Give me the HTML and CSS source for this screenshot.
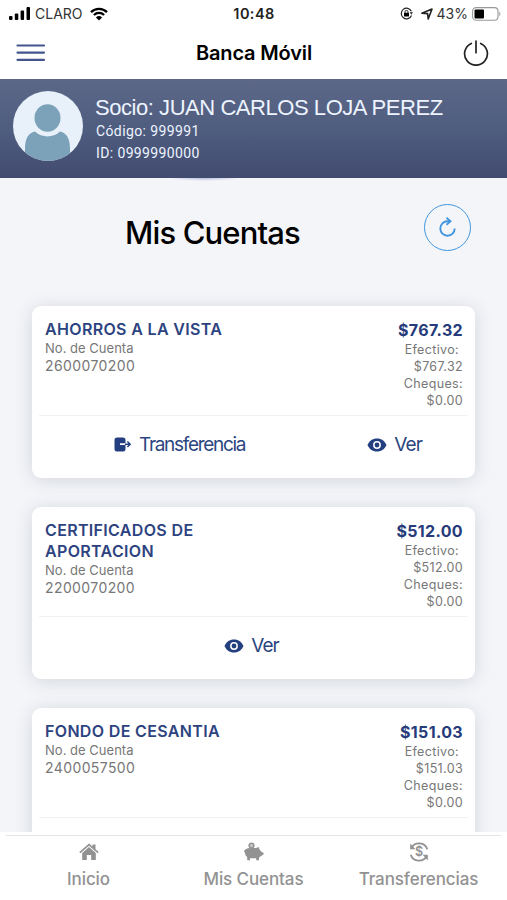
FILE: index.html
```html
<!DOCTYPE html>
<html lang="es">
  <head>
    <meta charset="UTF-8" />
    <meta name="viewport" content="width=device-width, initial-scale=1.0" />
    <title>Banca Móvil</title>
    <link rel="stylesheet" href="styles.css" />
  </head>
  <body>
    <svg class="sprite">
      <symbol id="eye" viewBox="0 0 20 14">
        <path fill-rule="evenodd" d="M10 .5C5.500.5 2 3.200.5 7 2 10.800 5.500 13.500 10 13.500s8-2.700 9.500-6.500C18 3.200 14.500.5 10 .5zm0 2.600a3.900 3.900 0 1 1 0 7.800 3.900 3.900 0 0 1 0-7.800z" />
        <circle cx="10" cy="7" r="2.400" />
      </symbol>
    </svg>

    <div class="statusbar">
      <div class="carrier">
        <svg width="22" height="13" viewBox="0 0 22 13">
          <rect x="0" y="9" width="3.500" height="4" rx="1" />
          <rect x="5.800" y="6.500" width="3.500" height="6.500" rx="1" />
          <rect x="11.600" y="3.500" width="3.500" height="9.500" rx="1" />
          <rect x="17.500" y="0" width="3.500" height="13" rx="1" />
        </svg>
        <span class="carrier_name">CLARO</span>
        <svg width="18" height="14" viewBox="0 0 18 14">
          <path d="M1 5.200a11.500 11.500 0 0 1 16 0M3.900 8a7.400 7.400 0 0 1 10.200 0" fill="none" stroke="#000" stroke-width="2.300" />
          <path d="M9 13.500 5.900 10.400a4.500 4.500 0 0 1 6.200 0z" />
        </svg>
      </div>
      <div class="clock">10:48</div>
      <div class="battery">
        <svg width="13" height="13" viewBox="0 0 13 13">
          <path d="M11.400 4.300A5.300 5.300 0 1 0 11.500 8.500" fill="none" stroke="#222" stroke-width="1.200" />
          <path d="M9.700 5.200h3.200l-1.500 2.500z" fill="#222" />
          <rect x="4" y="5.800" width="5" height="3.600" rx=".5" />
          <path d="M5 6V4.900a1.500 1.500 0 0 1 3 0V6" fill="none" stroke="#222" />
        </svg>
        <svg class="arrow" width="12" height="12" viewBox="0 0 12 12">
          <path d="M.9 5.300 11 1 7.200 11 6.600 5.600z" fill="none" stroke="#222" stroke-width="1.600" stroke-linejoin="round" />
        </svg>
        <span class="percent">43%</span>
        <svg width="29" height="14" viewBox="0 0 29 14">
          <rect x=".6" y=".6" width="25.400" height="12.600" rx="3.500" fill="none" stroke="#999" stroke-width="1.100" />
          <rect x="2.500" y="2.500" width="9.500" height="9" rx="1" />
          <path d="M27.300 4.800c1.400.4 1.400 4 0 4.400z" fill="#999" />
        </svg>
      </div>
    </div>

    <header class="topbar">
      <svg class="menu" width="30" height="18" viewBox="0 0 30 18">
        <path d="M1.500 1.500h26.500M1.500 8.600h26.500M1.500 15.800h26.500" stroke="#43558c" stroke-width="2.200" stroke-linecap="round" />
      </svg>
      <h1>Banca Móvil</h1>
      <svg class="power" width="26" height="26" viewBox="0 0 26 26">
        <path d="M8.300 3.400a11.400 11.400 0 1 0 9.400 0M13 1v11.700" fill="none" stroke="#222" stroke-width="1.700" stroke-linecap="round" />
      </svg>
    </header>

    <section class="member">
      <svg class="avatar" width="70" height="70" viewBox="0 0 70 70">
        <defs>
          <clipPath id="round"><circle cx="35" cy="35" r="35" /></clipPath>
        </defs>
        <circle cx="35" cy="35" r="35" fill="#e8f1f9" />
        <g clip-path="url(#round)" fill="#7ba2b8">
          <ellipse cx="34.500" cy="27" rx="13" ry="13.700" />
          <path d="M12 70V58c0-10 3-16 10-17.500 7 6.500 18 6.500 25 0C54 42 57 48 57 58v12z" />
        </g>
      </svg>
      <div class="member_info">
        <div class="member_name">Socio: JUAN CARLOS LOJA PEREZ</div>
        <div class="member_code">Código: 999991</div>
        <div class="member_id">ID: 0999990000</div>
      </div>
    </section>

    <main>
      <div class="heading">
        <h2>Mis Cuentas</h2>
        <button class="refresh">
          <svg width="20" height="22" viewBox="0 0 20 22">
            <path d="M12.500 4.300H9.500a7.200 7.200 0 1 0 7.200 7.200" fill="none" stroke="#4296de" stroke-width="1.900" />
            <path d="M8.500 .8l4 3.500-4 3.500" fill="none" stroke="#4296de" stroke-width="1.800" />
          </svg>
        </button>
      </div>

      <article class="card">
        <div class="card_body">
          <div class="account">
            <h3>AHORROS A LA VISTA</h3>
            <div class="label">No. de Cuenta</div>
            <div class="number">2600070200</div>
          </div>
          <div class="balance">
            <div class="total">$767.32</div>
            <div class="cash">Efectivo:</div>
            <div>$767.32</div>
            <div>Cheques:</div>
            <div>$0.00</div>
          </div>
        </div>
        <div class="actions actions_two">
          <a class="action transfer">
            <svg width="17" height="15" viewBox="0 0 17 15">
              <path d="M3 .5h6A2.500 2.500 0 0 1 11.500 3v3.300H6v1.800h5.500V12A2.500 2.500 0 0 1 9 14.500H3A2.500 2.500 0 0 1 .5 12V3A2.500 2.500 0 0 1 3 .5z" />
              <path d="M11 7.200h5M13.400 4.400l2.800 2.800-2.800 2.800" fill="none" stroke="#243f7f" stroke-width="1.400" />
            </svg>
            <span>Transferencia</span>
          </a>
          <a class="action view">
            <svg width="20" height="14"><use href="#eye" /></svg>
            <span>Ver</span>
          </a>
        </div>
      </article>

      <article class="card">
        <div class="card_body">
          <div class="account">
            <h3>CERTIFICADOS DE APORTACION</h3>
            <div class="label">No. de Cuenta</div>
            <div class="number">2200070200</div>
          </div>
          <div class="balance">
            <div class="total">$512.00</div>
            <div class="cash">Efectivo:</div>
            <div>$512.00</div>
            <div>Cheques:</div>
            <div>$0.00</div>
          </div>
        </div>
        <div class="actions">
          <a class="action view">
            <svg width="20" height="14"><use href="#eye" /></svg>
            <span>Ver</span>
          </a>
        </div>
      </article>

      <article class="card">
        <div class="card_body">
          <div class="account">
            <h3>FONDO DE CESANTIA</h3>
            <div class="label">No. de Cuenta</div>
            <div class="number">2400057500</div>
          </div>
          <div class="balance">
            <div class="total">$151.03</div>
            <div class="cash">Efectivo:</div>
            <div>$151.03</div>
            <div>Cheques:</div>
            <div>$0.00</div>
          </div>
        </div>
        <div class="actions"></div>
      </article>
    </main>

    <nav class="tabs">
      <a class="tab">
        <svg width="20" height="20" viewBox="0 0 20 20">
          <path d="M10 1.500l3.500 3V2.500h3v4.700l3.200 2.900-1.100 1.200L10 3.800l-8.600 7.500L.3 10.100z" />
          <path d="M10 5l6.800 6V18h-4.600v-5H7.800v5H3.200V11z" />
        </svg>
        <span>Inicio</span>
      </a>
      <a class="tab">
        <svg width="22" height="20" viewBox="0 0 22 20">
          <circle cx="8.500" cy="3.500" r="2.400" fill="#c4c4c4" stroke="#929292" stroke-width="1.400" />
          <path d="M1 8.500c.7 0 1-.5 1.500-1.300C4 6.300 6 6 8 6h5c1 0 1.800-.7 3-.7l.3 2c.8.6 1.300 1.300 1.700 2.200L20.700 11v1.200l-3 2c-.7.6-1.200 1-1.700 1.300v2.800h-2.800v-2H7v2H4.200v-3.200C2.800 14 2 12.500 2 10.500c-.6-.3-1-.9-1-2z" />
        </svg>
        <span>Mis Cuentas</span>
      </a>
      <a class="tab">
        <svg width="20" height="20" viewBox="0 0 20 20">
          <path d="M2.300 6.200A8.700 8.700 0 0 1 18.300 7.200M17.700 13.800A8.700 8.700 0 0 1 1.700 12.800" fill="none" stroke="#929292" stroke-width="1.900" />
          <path d="M1.200 1.500V7.200h5.200zM18.800 18.500v-5.700h-5.200z" />
          <text x="10" y="14.300" text-anchor="middle">$</text>
        </svg>
        <span>Transferencias</span>
      </a>
    </nav>
  </body>
</html>
```

FILE: styles.css
```css
* {
  box-sizing: border-box;
  margin: 0;
  padding: 0;
}
body {
  display: flex;
  flex-direction: column;
  height: 900px;
  overflow: hidden;
  background-color: #fff;
  color: #000;
  font-family: Inter, "Liberation Sans", Arial, sans-serif;
}
svg {
  display: block;
  flex: none;
}
.sprite {
  position: absolute;
  width: 0;
  height: 0;
}

.statusbar {
  display: grid;
  grid-template-columns: 1fr auto 1fr;
  align-items: center;
  flex: none;
  height: 27px;
  padding: 0 6px 0 9px;
}
.carrier,
.battery {
  display: flex;
  align-items: center;
}
.carrier_name {
  margin: 0 7px 0 4px;
  color: #333;
  font-size: 14px;
}
.clock {
  margin-right: 2px;
  color: #222;
  font-size: 14.5px;
  font-weight: 600;
  letter-spacing: 0.4px;
}
.battery {
  justify-content: flex-end;
}
.arrow {
  margin: 0 4px 0 8px;
}
.percent {
  margin-right: 4px;
  color: #333;
  font-size: 14px;
}

.topbar {
  display: grid;
  grid-template-columns: 1fr auto 1fr;
  align-items: center;
  flex: none;
  height: 52px;
  padding: 0 18px 1px 16px;
}
.topbar h1 {
  padding-left: 3px;
  font-size: 20px;
  font-weight: 600;
  letter-spacing: -0.15px;
}
.power {
  justify-self: end;
}

.member {
  display: flex;
  flex: none;
  height: 99px;
  padding: 12px 13px;
  background: linear-gradient(#5d6888, #4f5d7f 50%, #414b70);
  color: #edf4ff;
}
.member_info {
  padding: 4px 0 0 12px;
  font-family: Roboto, sans-serif;
  font-size: 14px;
}
.member_name {
  font-family: "Liberation Sans", Arial, sans-serif;
  font-size: 22px;
  line-height: 25px;
  letter-spacing: -0.45px;
  white-space: nowrap;
}
.member_code,
.member_id {
  padding-left: 1px;
  line-height: 22px;
  letter-spacing: 0.38px;
}

main {
  flex: 1;
  min-height: 0;
  overflow: hidden;
  padding: 0 32px;
  background: radial-gradient(ellipse 36px 3px at 204px 0, #b9bedc, #f3f5f9) #f3f5f9;
}
.heading {
  display: flex;
  justify-content: space-between;
  height: 128px;
  padding: 26px 4px 0 93px;
}
h2 {
  padding-top: 9px;
  font-size: 31px;
  font-weight: 500;
  line-height: 40px;
  letter-spacing: -0.85px;
}
.refresh {
  display: flex;
  align-items: center;
  justify-content: center;
  width: 47px;
  height: 47px;
  border: 1.5px solid #4296de;
  border-radius: 50%;
  background: none;
}

.card {
  height: 172px;
  margin-bottom: 29px;
  padding: 0 7px;
  border-radius: 9px;
  background-color: #fff;
  box-shadow: 0 2px 18px rgba(50, 55, 65, 0.16);
}
.card_body {
  display: flex;
  justify-content: space-between;
  height: 110px;
  padding: 13px 5px 0 6px;
  border-bottom: 1px solid #f2f2f3;
  color: #777;
}
.account {
  width: 200px;
}
h3 {
  margin-bottom: -1px;
  color: #2d4380;
  font-size: 16px;
  font-weight: 600;
  line-height: 21px;
  letter-spacing: 0.34px;
}
.label {
  font-size: 13px;
  line-height: 18px;
  letter-spacing: 0.02px;
}
.number {
  font-size: 14px;
  line-height: 18px;
  letter-spacing: 0.4px;
}
.balance {
  padding-top: 1px;
  font-size: 12.5px;
  line-height: 17px;
  letter-spacing: 0.35px;
  text-align: right;
}
.total {
  margin-bottom: 1px;
  color: #263b7a;
  font-size: 16px;
  font-weight: 700;
  line-height: 20px;
}
.cash {
  padding-right: 4px;
}
.actions {
  display: flex;
  justify-content: center;
  height: 58px;
  padding: 0 4px 1px 0;
  color: #2c467f;
  fill: #243f7f;
}
.actions_two {
  justify-content: space-between;
  padding: 0 46px 1px 75px;
}
.action {
  display: flex;
  align-items: center;
  gap: 7px;
  font-size: 19px;
  letter-spacing: -0.9px;
}
.transfer {
  gap: 8px;
  letter-spacing: -1.3px;
}

.tabs {
  display: grid;
  grid-template-columns: 1fr 1fr 1fr;
  flex: none;
  height: 68px;
  margin: 0 6px;
  padding-top: 10px;
  background: linear-gradient(#e5e5e7, #e5e5e7) 0 3px / 100% 1px no-repeat;
}
.tab {
  display: flex;
  flex-direction: column;
  align-items: center;
  gap: 6px;
  color: #929292;
  fill: #929292;
  font-size: 17px;
  font-weight: 500;
  line-height: 22px;
  letter-spacing: -0.1px;
}
.tab text {
  font-size: 12.5px;
  font-weight: 600;
  letter-spacing: 0;
}
```
